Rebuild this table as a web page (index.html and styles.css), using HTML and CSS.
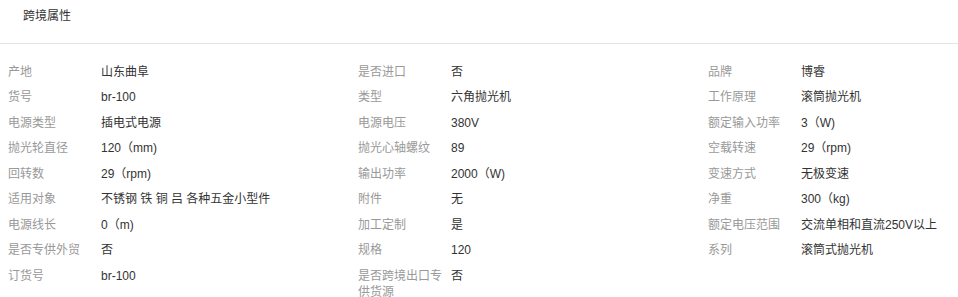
FILE: index.html
```html
<!DOCTYPE html>
<html lang="zh">
<head>
<meta charset="utf-8">
<link rel="stylesheet" href="styles.css">
</head>
<body>
<div class="panel">
  <div class="panel-title">跨境属性</div>
  <div class="attrs">
    <div class="attr"><span class="k">产地</span><span class="v">山东曲阜</span></div>
    <div class="attr"><span class="k">是否进口</span><span class="v">否</span></div>
    <div class="attr"><span class="k">品牌</span><span class="v">博睿</span></div>
    <div class="attr"><span class="k">货号</span><span class="v">br-100</span></div>
    <div class="attr"><span class="k">类型</span><span class="v">六角抛光机</span></div>
    <div class="attr"><span class="k">工作原理</span><span class="v">滚筒抛光机</span></div>
    <div class="attr"><span class="k">电源类型</span><span class="v">插电式电源</span></div>
    <div class="attr"><span class="k">电源电压</span><span class="v">380V</span></div>
    <div class="attr"><span class="k">额定输入功率</span><span class="v">3（W)</span></div>
    <div class="attr"><span class="k">抛光轮直径</span><span class="v">120（mm)</span></div>
    <div class="attr"><span class="k">抛光心轴螺纹</span><span class="v">89</span></div>
    <div class="attr"><span class="k">空载转速</span><span class="v">29（rpm)</span></div>
    <div class="attr"><span class="k">回转数</span><span class="v">29（rpm)</span></div>
    <div class="attr"><span class="k">输出功率</span><span class="v">2000（W)</span></div>
    <div class="attr"><span class="k">变速方式</span><span class="v">无极变速</span></div>
    <div class="attr"><span class="k">适用对象</span><span class="v">不锈钢 铁 铜 吕 各种五金小型件</span></div>
    <div class="attr"><span class="k">附件</span><span class="v">无</span></div>
    <div class="attr"><span class="k">净重</span><span class="v">300（kg)</span></div>
    <div class="attr"><span class="k">电源线长</span><span class="v">0（m)</span></div>
    <div class="attr"><span class="k">加工定制</span><span class="v">是</span></div>
    <div class="attr"><span class="k">额定电压范围</span><span class="v">交流单相和直流250V以上</span></div>
    <div class="attr"><span class="k">是否专供外贸</span><span class="v">否</span></div>
    <div class="attr"><span class="k">规格</span><span class="v">120</span></div>
    <div class="attr"><span class="k">系列</span><span class="v">滚筒式抛光机</span></div>
    <div class="attr"><span class="k">订货号</span><span class="v">br-100</span></div>
    <div class="attr"><span class="k">是否跨境出口专供货源</span><span class="v">否</span></div>
  </div>
</div>
</body>
</html>
```
FILE: styles.css
```css
html, body {
  margin: 0;
  padding: 0;
  background: #fff;
}
body {
  font-family: "Liberation Sans", "Noto Sans CJK SC", sans-serif;
  font-size: 12px;
  color: #333;
}
.panel-title {
  height: 43px;
  line-height: 32px;
  padding-left: 23px;
  border-bottom: 1px solid #e4e4e4;
  color: #333;
}
.attrs {
  display: grid;
  grid-template-columns: 350px 350px 1fr;
  padding: 15px 0 0 8px;
}
.attr {
  display: flex;
  line-height: 16px;
  padding: 4.75px 0;
}
.k {
  flex: 0 0 93px;
  box-sizing: border-box;
  padding-right: 8px;
  color: #999;
}
.v {
  color: #333;
}
```
